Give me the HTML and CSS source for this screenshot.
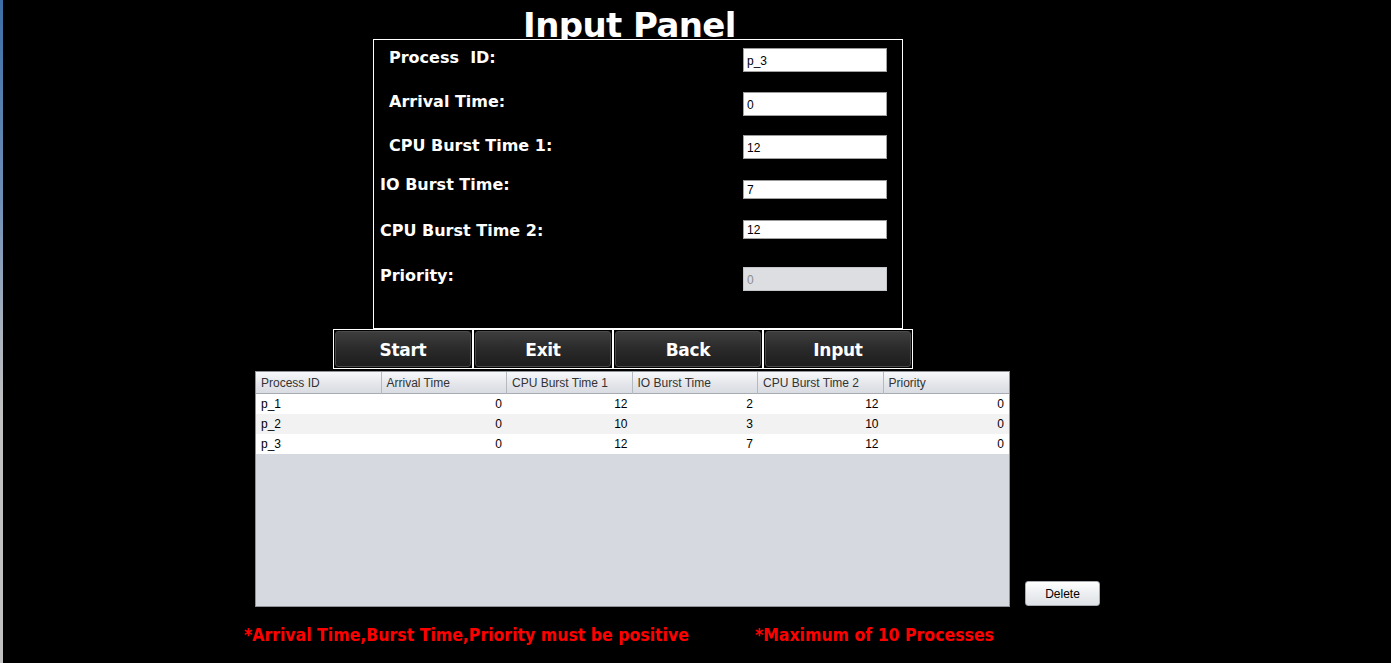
FILE: index.html
```html
<!DOCTYPE html>
<html>
<head>
<meta charset="utf-8">
<link rel="stylesheet" href="styles.css">
</head>
<body>
<div class="page">
  <div class="edge"></div>
  <main class="main">
    <h1 class="title">Input Panel</h1>
    <section class="panel">
      <div class="row r1"><span class="lbl in16 o0">Process&nbsp; ID:</span><input class="fld" value="p_3" readonly></div>
      <div class="row r2"><span class="lbl in16 o0">Arrival Time:</span><input class="fld" value="0" readonly></div>
      <div class="row r3"><span class="lbl in16 o1">CPU Burst Time 1:</span><input class="fld" value="12" readonly></div>
      <div class="row r4"><span class="lbl in7 om5">IO Burst Time:</span><input class="fld short" value="7" readonly></div>
      <div class="row r5"><span class="lbl in7 o1">CPU Burst Time 2:</span><input class="fld short" value="12" readonly></div>
      <div class="row r6"><span class="lbl in7 om1">Priority:</span><input class="fld dis" value="0" disabled></div>
    </section>
    <div class="btns">
      <button class="btn w140"><span>Start</span></button>
      <button class="btn w140"><span>Exit</span></button>
      <button class="btn w150"><span>Back</span></button>
      <button class="btn w150"><span>Input</span></button>
    </div>
    <div class="tablerow">
      <div class="tbl">
        <div class="thead">
          <div class="th">Process ID</div>
          <div class="th">Arrival Time</div>
          <div class="th">CPU Burst Time 1</div>
          <div class="th">IO Burst Time</div>
          <div class="th">CPU Burst Time 2</div>
          <div class="th">Priority</div>
        </div>
        <div class="tr">
          <div class="td">p_1</div><div class="td num">0</div><div class="td num">12</div><div class="td num">2</div><div class="td num">12</div><div class="td num">0</div>
        </div>
        <div class="tr alt">
          <div class="td">p_2</div><div class="td num">0</div><div class="td num">10</div><div class="td num">3</div><div class="td num">10</div><div class="td num">0</div>
        </div>
        <div class="tr">
          <div class="td">p_3</div><div class="td num">0</div><div class="td num">12</div><div class="td num">7</div><div class="td num">12</div><div class="td num">0</div>
        </div>
      </div>
      <button class="del">Delete</button>
    </div>
    <div class="notes">
      <span>*Arrival Time,Burst Time,Priority must be positive</span>
      <span>*Maximum of 10 Processes</span>
    </div>
  </main>
</div>
</body>
</html>
```

FILE: styles.css
```css
html, body {
  margin: 0;
  padding: 0;
  background: #000;
  height: 663px;
  overflow: hidden;
}
.page {
  display: flex;
  height: 663px;
}
.edge {
  width: 3px;
  flex: none;
  background: linear-gradient(#3b6ea5 0%, #6e8fb5 30%, #a9b2bd 50%, #c0c0c0 62%, #c0c0c0 100%);
}
.main {
  flex: 1;
  display: flex;
  flex-direction: column;
  font-family: "DejaVu Sans", Tahoma, sans-serif;
}
.title {
  margin: 0;
  width: 1253px;
  height: 39px;
  overflow: hidden;
  text-align: center;
  color: #fff;
  font-size: 34px;
  font-weight: bold;
  line-height: 50px;
  letter-spacing: -0.6px;
}
.panel {
  margin-left: 370px;
  width: 513px;
  height: 288px;
  border: 1px solid #fff;
  padding: 0 15px 0 0;
  box-sizing: content-box;
  display: flex;
  flex-direction: column;
}
.row {
  display: flex;
  align-items: flex-start;
}
.r1 { margin-top: 8px; }
.r2 { margin-top: 20px; }
.r3 { margin-top: 19px; }
.r4 { margin-top: 21px; }
.r5 { margin-top: 21px; }
.r6 { margin-top: 26px; }
.lbl {
  color: #fff;
  font-weight: bold;
  font-size: 16px;
  line-height: 20px;
  letter-spacing: 0;
  white-space: pre;
}
.in16 { margin-left: 15px; }
.in7 { margin-left: 6px; }
.o0 { margin-top: 0; }
.o1 { margin-top: 1px; }
.om1 { margin-top: -1px; }
.om5 { margin-top: -5px; }
.fld {
  margin-left: auto;
  width: 144px;
  height: 24px;
  box-sizing: border-box;
  border: 1px solid #a3a3a3;
  border-top-color: #9a9a9a;
  background: #fff;
  padding: 1px 0 0 3px;
  font-family: "Liberation Sans", Arial, sans-serif;
  font-size: 12px;
  color: #000;
  outline: none;
}
.fld.short { height: 19px; }
.fld.dis {
  background: #dcdee2;
  color: #8d8d8d;
  border-color: #c4c6ca;
}
.btns {
  display: flex;
  margin-left: 330px;
  height: 40px;
}
.btn {
  box-sizing: border-box;
  height: 40px;
  margin: 0;
  padding: 1px;
  border: 1px solid #fff;
  background: #000;
  display: flex;
  cursor: pointer;
}
.btn span {
  flex: 1;
  display: flex;
  align-items: center;
  justify-content: center;
  border-radius: 3px;
  border: 1px solid #4a4a4a;
  background: linear-gradient(#3d3d3d, #2a2a2a 50%, #1d1d1d);
  color: #fff;
  font-family: "DejaVu Sans", Tahoma, sans-serif;
  font-weight: bold;
  font-size: 17px;
  letter-spacing: -0.3px;
  padding-top: 2px;
}
.w140 { width: 140px; }
.w150 { width: 150px; }
.tablerow {
  display: flex;
  align-items: flex-end;
  margin-left: 252px;
  margin-top: 2px;
}
.tbl {
  width: 755px;
  height: 236px;
  box-sizing: border-box;
  border: 1px solid #8e9399;
  background: #d6d9df;
  font-family: "Liberation Sans", Arial, sans-serif;
  font-size: 12px;
}
.thead {
  display: grid;
  grid-template-columns: repeat(6, 1fr);
  height: 21px;
  background: linear-gradient(#f7f8fa, #e3e5ea 60%, #d9dce2);
  border-bottom: 1px solid #a8acb2;
}
.th {
  padding-left: 5px;
  line-height: 22px;
  color: #333;
  border-right: 1px solid #b5b9c0;
}
.th:last-child { border-right: none; }
.tr {
  display: grid;
  grid-template-columns: repeat(6, 1fr);
  height: 20px;
  background: #fff;
}
.tr.alt { background: #f2f2f2; }
.td {
  line-height: 21px;
  padding: 0 5px;
  color: #000;
}
.td.num { text-align: right; }
.del {
  margin: 0 0 1px 15px;
  width: 75px;
  height: 25px;
  box-sizing: border-box;
  border: 1px solid #a7abb2;
  border-radius: 3px;
  background: linear-gradient(#ffffff, #eceef1 50%, #dfe2e6);
  font-family: "Liberation Sans", Arial, sans-serif;
  font-size: 12px;
  color: #000;
  padding: 1px 0 0;
}
.notes {
  display: flex;
  gap: 66px;
  margin-left: 241px;
  margin-top: 18px;
  color: #ff0000;
  font-family: "DejaVu Sans Condensed", "DejaVu Sans", sans-serif;
  font-weight: bold;
  font-size: 17.5px;
}
```
